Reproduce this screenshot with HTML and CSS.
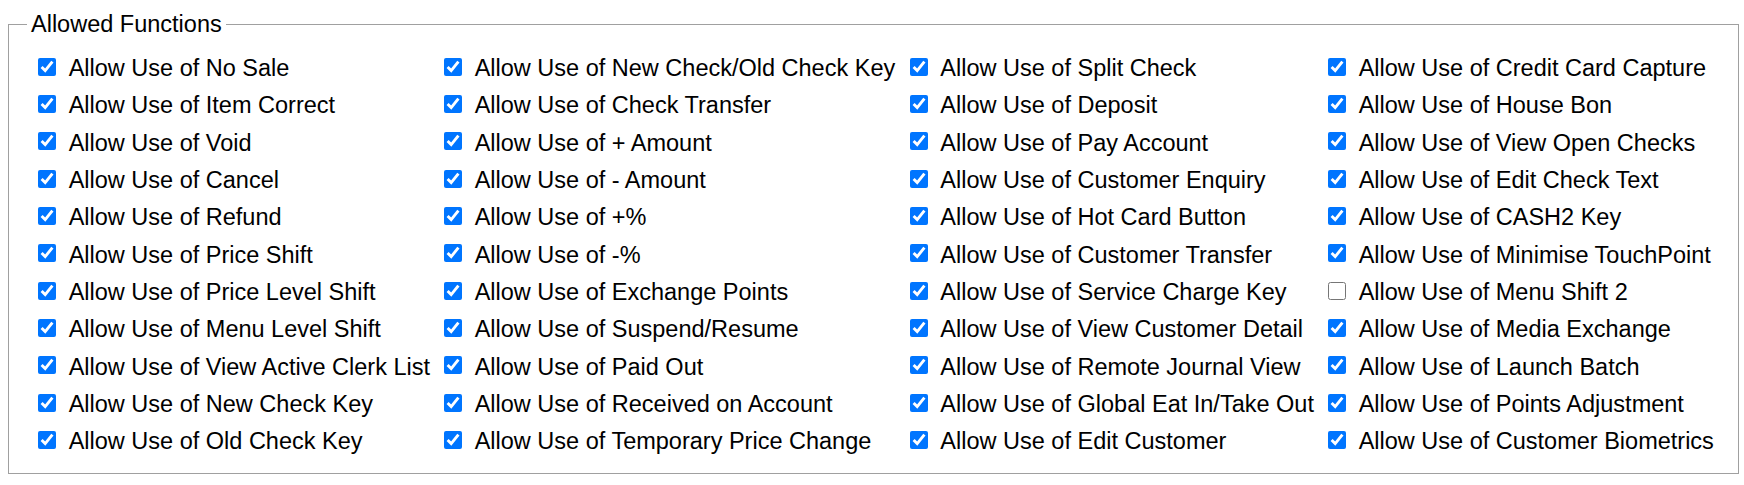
FILE: index.html
```html
<!DOCTYPE html>
<html lang="en">
<head>
<meta charset="utf-8">
<title>Allowed Functions</title>
<link rel="stylesheet" href="styles.css">
</head>
<body>
<fieldset class="group">
  <legend class="group-title">Allowed Functions</legend>
  <div class="options">
    <label class="opt"><input type="checkbox" checked><span>Allow Use of No Sale</span></label>
    <label class="opt"><input type="checkbox" checked><span>Allow Use of Item Correct</span></label>
    <label class="opt"><input type="checkbox" checked><span>Allow Use of Void</span></label>
    <label class="opt"><input type="checkbox" checked><span>Allow Use of Cancel</span></label>
    <label class="opt"><input type="checkbox" checked><span>Allow Use of Refund</span></label>
    <label class="opt"><input type="checkbox" checked><span>Allow Use of Price Shift</span></label>
    <label class="opt"><input type="checkbox" checked><span>Allow Use of Price Level Shift</span></label>
    <label class="opt"><input type="checkbox" checked><span>Allow Use of Menu Level Shift</span></label>
    <label class="opt"><input type="checkbox" checked><span>Allow Use of View Active Clerk List</span></label>
    <label class="opt"><input type="checkbox" checked><span>Allow Use of New Check Key</span></label>
    <label class="opt"><input type="checkbox" checked><span>Allow Use of Old Check Key</span></label>

    <label class="opt"><input type="checkbox" checked><span>Allow Use of New Check/Old Check Key</span></label>
    <label class="opt"><input type="checkbox" checked><span>Allow Use of Check Transfer</span></label>
    <label class="opt"><input type="checkbox" checked><span>Allow Use of + Amount</span></label>
    <label class="opt"><input type="checkbox" checked><span>Allow Use of - Amount</span></label>
    <label class="opt"><input type="checkbox" checked><span>Allow Use of +%</span></label>
    <label class="opt"><input type="checkbox" checked><span>Allow Use of -%</span></label>
    <label class="opt"><input type="checkbox" checked><span>Allow Use of Exchange Points</span></label>
    <label class="opt"><input type="checkbox" checked><span>Allow Use of Suspend/Resume</span></label>
    <label class="opt"><input type="checkbox" checked><span>Allow Use of Paid Out</span></label>
    <label class="opt"><input type="checkbox" checked><span>Allow Use of Received on Account</span></label>
    <label class="opt"><input type="checkbox" checked><span>Allow Use of Temporary Price Change</span></label>

    <label class="opt"><input type="checkbox" checked><span>Allow Use of Split Check</span></label>
    <label class="opt"><input type="checkbox" checked><span>Allow Use of Deposit</span></label>
    <label class="opt"><input type="checkbox" checked><span>Allow Use of Pay Account</span></label>
    <label class="opt"><input type="checkbox" checked><span>Allow Use of Customer Enquiry</span></label>
    <label class="opt"><input type="checkbox" checked><span>Allow Use of Hot Card Button</span></label>
    <label class="opt"><input type="checkbox" checked><span>Allow Use of Customer Transfer</span></label>
    <label class="opt"><input type="checkbox" checked><span>Allow Use of Service Charge Key</span></label>
    <label class="opt"><input type="checkbox" checked><span>Allow Use of View Customer Detail</span></label>
    <label class="opt"><input type="checkbox" checked><span>Allow Use of Remote Journal View</span></label>
    <label class="opt"><input type="checkbox" checked><span>Allow Use of Global Eat In/Take Out</span></label>
    <label class="opt"><input type="checkbox" checked><span>Allow Use of Edit Customer</span></label>

    <label class="opt"><input type="checkbox" checked><span>Allow Use of Credit Card Capture</span></label>
    <label class="opt"><input type="checkbox" checked><span>Allow Use of House Bon</span></label>
    <label class="opt"><input type="checkbox" checked><span>Allow Use of View Open Checks</span></label>
    <label class="opt"><input type="checkbox" checked><span>Allow Use of Edit Check Text</span></label>
    <label class="opt"><input type="checkbox" checked><span>Allow Use of CASH2 Key</span></label>
    <label class="opt"><input type="checkbox" checked><span>Allow Use of Minimise TouchPoint</span></label>
    <label class="opt"><input type="checkbox"><span>Allow Use of Menu Shift 2</span></label>
    <label class="opt"><input type="checkbox" checked><span>Allow Use of Media Exchange</span></label>
    <label class="opt"><input type="checkbox" checked><span>Allow Use of Launch Batch</span></label>
    <label class="opt"><input type="checkbox" checked><span>Allow Use of Points Adjustment</span></label>
    <label class="opt"><input type="checkbox" checked><span>Allow Use of Customer Biometrics</span></label>
  </div>
</fieldset>
</body>
</html>
```
FILE: styles.css
```css
html, body {
  margin: 0;
  padding: 0;
  background: #ffffff;
}

body {
  font-family: "Liberation Sans", Arial, sans-serif;
  font-size: 23.5px;
  color: #000000;
}

.group {
  box-sizing: border-box;
  width: 1731px;
  margin: 11px 0 0 8px;
  padding: 10px 0 14px 17.5px;
  border: 1px solid #a0a0a0;
  min-width: 0;
}

.group-title {
  padding: 0 4.5px;
  font-size: 23.5px;
  line-height: normal;
}

.options {
  display: grid;
  grid-template-columns: 406px 465.7px 418.3px 1fr;
  grid-template-rows: repeat(11, 37.33px);
  grid-auto-flow: column;
  margin-left: 11.8px;
}

.opt {
  display: flex;
  align-items: center;
  gap: 12.2px;
  white-space: nowrap;
}

.opt input {
  width: 18.2px;
  height: 18.2px;
  margin: 0;
  flex: none;
}

.opt span {
  padding-top: 4px;
}
```
